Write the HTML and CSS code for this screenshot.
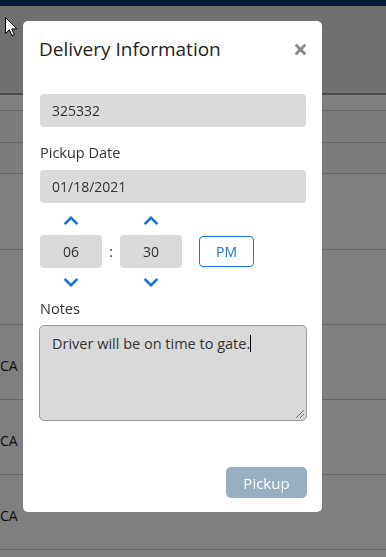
FILE: index.html
```html
<!DOCTYPE html>
<html lang="en">
<head>
  <meta charset="UTF-8">
  <title>Delivery Information</title>
  <link rel="stylesheet" href="styles.css">
</head>
<body>

  <div class="topbar"></div>
  <div class="header"></div>
  <div class="subhead"></div>
  <div class="rows">
    <div class="row row-short"></div>
    <div class="row row-short"></div>
    <div class="row row-first"></div>
    <div class="row"></div>
    <div class="row"><span class="cell">CA</span></div>
    <div class="row"><span class="cell">CA</span></div>
    <div class="row"><span class="cell">CA</span></div>
    <div class="row row-last"></div>
  </div>

  <div class="backdrop"></div>

  <!-- MODAL -->
  <div class="modal">
    <div class="modal-header">
      <h2>Delivery Information</h2>
      <span class="close">
        <svg width="11" height="11" viewBox="0 80 352 352"><path fill="currentColor" d="M242.72 256l100.07-100.07c12.28-12.280 12.28-32.19 0-44.48l-22.24-22.24c-12.28-12.28-32.19-12.28-44.48 0L176 189.28 75.930 89.21c-12.28-12.28-32.19-12.28-44.48 0L9.21 111.45c-12.28 12.28-12.28 32.19 0 44.48L109.28 256 9.21 356.070c-12.28 12.28-12.28 32.19 0 44.48l22.24 22.24c12.28 12.28 32.2 12.28 44.48 0L176 322.72l100.07 100.07c12.28 12.28 32.2 12.28 44.48 0l22.24-22.24c12.28-12.28 12.28-32.19 0-44.48L242.72 256z"/></svg>
      </span>
    </div>

    <div class="modal-body">
      <div class="field">325332</div>

      <label class="label">Pickup Date</label>
      <div class="field">01/18/2021</div>

      <div class="time">
        <div class="spinner">
          <svg class="chev" viewBox="6 120 436 270"><path d="M240.971 130.524l194.343 194.343c9.373 9.373 9.373 24.569 0 33.941l-22.667 22.667c-9.357 9.357-24.522 9.375-33.901.04L224 227.495 69.255 381.516c-9.379 9.335-24.544 9.317-33.901-.04l-22.667-22.667c-9.373-9.373-9.373-24.569 0-33.941L207.03 130.525c9.372-9.373 24.568-9.373 33.941-.001z"/></svg>
          <div class="time-box">06</div>
          <svg class="chev down" viewBox="6 120 436 270"><path d="M240.971 130.524l194.343 194.343c9.373 9.373 9.373 24.569 0 33.941l-22.667 22.667c-9.357 9.357-24.522 9.375-33.901.04L224 227.495 69.255 381.516c-9.379 9.335-24.544 9.317-33.901-.04l-22.667-22.667c-9.373-9.373-9.373-24.569 0-33.941L207.03 130.525c9.372-9.373 24.568-9.373 33.941-.001z"/></svg>
        </div>
        <span class="colon">:</span>
        <div class="spinner">
          <svg class="chev" viewBox="6 120 436 270"><path d="M240.971 130.524l194.343 194.343c9.373 9.373 9.373 24.569 0 33.941l-22.667 22.667c-9.357 9.357-24.522 9.375-33.901.04L224 227.495 69.255 381.516c-9.379 9.335-24.544 9.317-33.901-.04l-22.667-22.667c-9.373-9.373-9.373-24.569 0-33.941L207.03 130.525c9.372-9.373 24.568-9.373 33.941-.001z"/></svg>
          <div class="time-box">30</div>
          <svg class="chev down" viewBox="6 120 436 270"><path d="M240.971 130.524l194.343 194.343c9.373 9.373 9.373 24.569 0 33.941l-22.667 22.667c-9.357 9.357-24.522 9.375-33.901.04L224 227.495 69.255 381.516c-9.379 9.335-24.544 9.317-33.901-.04l-22.667-22.667c-9.373-9.373-9.373-24.569 0-33.941L207.03 130.525c9.372-9.373 24.568-9.373 33.941-.001z"/></svg>
        </div>
        <button class="meridian">PM</button>
      </div>

      <label class="label label-notes">Notes</label>
      <div class="notes">Driver will be on time to gate.<span class="caret"></span><span class="grip"></span></div>
    </div>

    <div class="modal-footer">
      <button class="pickup">Pickup</button>
    </div>
  </div>

  <svg class="cursor" width="13" height="20" viewBox="0 0 13 20"><path d="M0.5 0.5 L0.5 16.5 L4.3 12.8 L6.8 18.6 L9.2 17.6 L6.7 11.9 L11.8 11.9 Z" fill="#fff" stroke="#000" stroke-width="1"/></svg>

</body>
</html>
```

FILE: styles.css
```css
body {
  margin: 0;
  font-family: 'Open Sans', 'Noto Sans', sans-serif;
  background-color: #fff;
  color: #333;
  overflow: hidden;
  height: 557px;
}

.topbar {
  height: 6px;
  background-color: #00366a;
}

.header {
  height: 87px;
  background-color: #e0e0e0;
  border-bottom: 2px solid #999;
}

.subhead {
  height: 15px;
  border-bottom: 1px solid #ccc;
}

.row {
  height: 74px;
  border-bottom: 1px solid #ccc;
  display: flex;
  align-items: center;
}

.row-short {
  height: 31px;
  background-color: #f6fafa;
}

.row-short + .row-short {
  height: 30px;
}

.row-first {
  height: 75px;
}

.row-last {
  height: 6px;
  border-bottom: none;
}

.cell {
  margin-top: 6px;
  font-size: 14px;
  color: #222;
}

.backdrop {
  position: fixed;
  left: 0;
  top: 0;
  width: 100%;
  height: 100%;
  background-color: rgba(0, 0, 0, 0.5);
}

.modal {
  position: absolute;
  left: 23px;
  top: 21px;
  width: 299px;
  height: 491px;
  box-sizing: border-box;
  background-color: #fff;
  border-radius: 5px;
  display: flex;
  flex-direction: column;
}

.modal-header {
  display: flex;
  justify-content: space-between;
  align-items: center;
  padding: 17px 16px 0 16px;
  height: 22px;
}

.modal-header h2 {
  margin: 0;
  font-size: 19px;
  font-weight: 500;
  color: #222;
}

.close {
  color: #8a8a8a;
  display: flex;
  margin-top: 1px;
}

.modal-body {
  padding: 34px 16px 0 17px;
}

.field {
  height: 33px;
  box-sizing: border-box;
  background-color: #dadada;
  border-radius: 4px;
  padding: 0 12px;
  display: flex;
  align-items: center;
  font-size: 14px;
  color: #333;
}

.label {
  display: block;
  font-size: 14.5px;
  line-height: 18px;
  color: #333;
  margin: 17px 0 8px 0;
}

.label-notes {
  margin: 13px 0 7px 0;
}

.time {
  display: flex;
  align-items: center;
  margin-top: 13px;
}

.spinner {
  display: flex;
  flex-direction: column;
  align-items: center;
  width: 62px;
}

.chev {
  width: 14px;
  height: 9px;
  fill: #0a74da;
}

.chev.down {
  transform: rotate(180deg);
}

.time-box {
  width: 62px;
  height: 33px;
  margin: 10px 0;
  border-radius: 4px;
  background-color: #dadada;
  display: flex;
  align-items: center;
  justify-content: center;
  font-size: 14px;
  color: #333;
}

.colon {
  width: 18px;
  text-align: center;
  font-size: 14px;
  color: #333;
}

.meridian {
  margin-left: 17px;
  width: 55px;
  height: 31px;
  border: 1px solid #1a73e8;
  border-radius: 4px;
  background-color: #fff;
  color: #1a73e8;
  font-family: inherit;
  font-size: 14px;
}

.notes {
  position: relative;
  height: 96px;
  box-sizing: border-box;
  margin-left: -1px;
  margin-right: -1px;
  border: 1px solid #999;
  border-radius: 5px;
  background-color: #d9d9d9;
  padding: 8px 12px;
  font-size: 14.5px;
  color: #333;
}

.caret {
  display: inline-block;
  width: 1px;
  height: 17px;
  background-color: #000;
  vertical-align: -3px;
}

.grip {
  position: absolute;
  right: 2px;
  bottom: 2px;
  width: 8px;
  height: 8px;
  background: linear-gradient(135deg, transparent 45%, #777 45%, #777 52%, transparent 52%, transparent 70%, #777 70%, #777 77%, transparent 77%);
}

.modal-footer {
  margin-top: auto;
  padding: 0 15px 14px 0;
  display: flex;
  justify-content: flex-end;
}

.pickup {
  width: 81px;
  height: 31px;
  border: none;
  border-radius: 5px;
  background-color: #97aec3;
  color: #fff;
  font-family: inherit;
  font-size: 15px;
}

.cursor {
  position: absolute;
  left: 5px;
  top: 17px;
}
```
